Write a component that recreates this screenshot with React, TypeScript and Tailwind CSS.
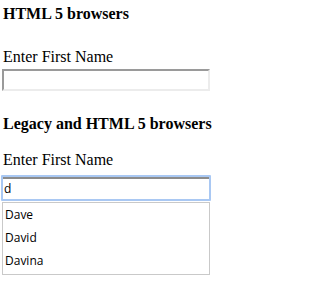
import React from "react";

export default function App() {
  const serif = { fontFamily: '"Liberation Serif", "Times New Roman", serif' };
  const sans = { fontFamily: '"Open Sans", "Noto Sans", sans-serif' };
  return (
    <div className="w-[232px] h-[296px] bg-white overflow-hidden px-[2px] text-black">
      <div
        className="mt-[5px] h-[18px] leading-[18px] text-[16px] font-bold pl-[1px] font-['Liberation_Serif',serif]"
        style={serif}
      >
        HTML 5 browsers
      </div>
      <div
        className="mt-[25px] h-[18px] leading-[18px] text-[16px] pl-[1px] font-['Liberation_Serif',serif]"
        style={serif}
      >
        Enter First Name
      </div>
      <div className="mt-[3px] w-[208px] h-[22px] border-2 border-t-[#9a9a9a] border-l-[#9a9a9a] border-b-[#ececec] border-r-[#ececec] bg-white" />
      <div
        className="mt-[24px] h-[18px] leading-[18px] text-[16px] font-bold pl-[1px] font-['Liberation_Serif',serif]"
        style={serif}
      >
        Legacy and HTML 5 browsers
      </div>
      <div
        className="mt-[18px] h-[18px] leading-[18px] text-[16px] pl-[1px] font-['Liberation_Serif',serif]"
        style={serif}
      >
        Enter First Name
      </div>
      <div className="mt-[6px] -ml-[1px] w-[210px] h-[26px] border-2 border-[#a9c8f3] rounded-[1px] bg-white">
        <div className="h-full border-t-2 border-t-[#8c8c8c] flex items-center pl-[1px] text-[12px]" style={sans}>
          d
        </div>
      </div>
      <div className="mt-[1px] w-[208px] h-[73px] border border-[#c9c9c9] bg-white text-[12px] pl-[2px]" style={sans}>
        <div className="h-[23px] leading-[23px]">Dave</div>
        <div className="h-[23px] leading-[23px]">David</div>
        <div className="h-[23px] leading-[23px]">Davina</div>
      </div>
    </div>
  );
}
